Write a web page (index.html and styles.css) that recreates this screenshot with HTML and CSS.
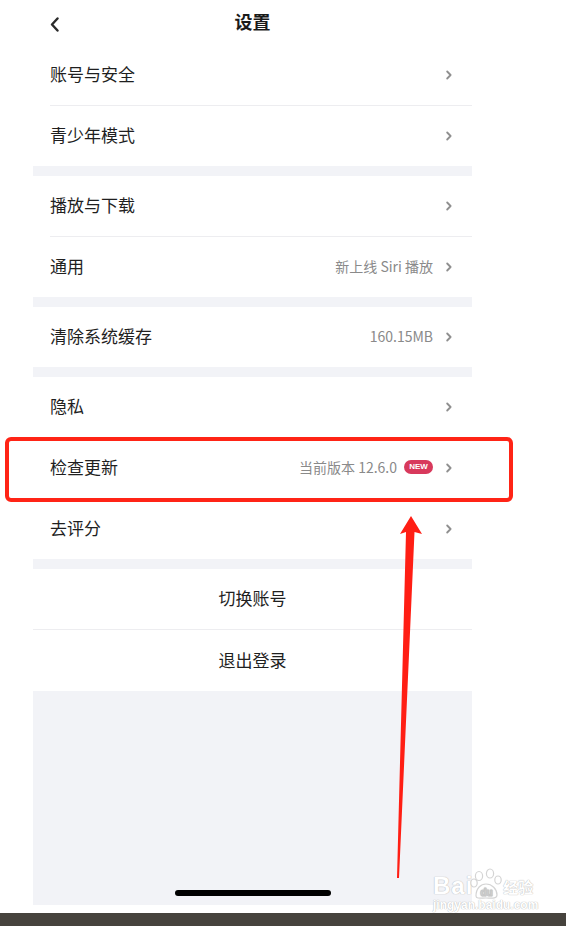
FILE: index.html
```html
<!DOCTYPE html>
<html lang="zh-CN">
<head>
    <meta charset="UTF-8">
    <meta name="viewport" content="width=device-width, initial-scale=1.0">
    <title>设置</title>
    <link rel="stylesheet" href="styles.css">
</head>
<body>
<div class="page">
  <div class="screen">
    <!-- Header -->
    <div class="nav-bar">
      <span class="back-btn">
        <svg width="9" height="15" viewBox="0 0 9 15"><polyline points="7.5,1.5 2,7.5 7.5,13.5" fill="none" stroke="#2b2b2b" stroke-width="2.4" stroke-linecap="round" stroke-linejoin="round"/></svg>
      </span>
      <h1 class="nav-title">设置</h1>
    </div>

    <div class="group">
      <div class="row"><span class="row-label">账号与安全</span><span class="row-right"><svg class="chev" width="6" height="10" viewBox="0 0 6 10"><polyline points="1.2,1.5 4.6,5 1.2,8.5"/></svg></span></div>
      <div class="row"><span class="row-label">青少年模式</span><span class="row-right"><svg class="chev" width="6" height="10" viewBox="0 0 6 10"><polyline points="1.2,1.5 4.6,5 1.2,8.5"/></svg></span></div>
    </div>

    <div class="group">
      <div class="row"><span class="row-label">播放与下载</span><span class="row-right"><svg class="chev" width="6" height="10" viewBox="0 0 6 10"><polyline points="1.2,1.5 4.6,5 1.2,8.5"/></svg></span></div>
      <div class="row"><span class="row-label">通用</span><span class="row-right"><span class="row-value">新上线 Siri 播放</span><svg class="chev" width="6" height="10" viewBox="0 0 6 10"><polyline points="1.2,1.5 4.6,5 1.2,8.5"/></svg></span></div>
    </div>

    <div class="group">
      <div class="row"><span class="row-label">清除系统缓存</span><span class="row-right"><span class="row-value">160.15MB</span><svg class="chev" width="6" height="10" viewBox="0 0 6 10"><polyline points="1.2,1.5 4.6,5 1.2,8.5"/></svg></span></div>
    </div>

    <div class="group">
      <div class="row"><span class="row-label">隐私</span><span class="row-right"><svg class="chev" width="6" height="10" viewBox="0 0 6 10"><polyline points="1.2,1.5 4.6,5 1.2,8.5"/></svg></span></div>
      <div class="row"><span class="row-label">检查更新</span><span class="row-right"><span class="row-value">当前版本 12.6.0</span><span class="badge-new">NEW</span><svg class="chev" width="6" height="10" viewBox="0 0 6 10"><polyline points="1.2,1.5 4.6,5 1.2,8.5"/></svg></span></div>
      <div class="row"><span class="row-label">去评分</span><span class="row-right"><svg class="chev" width="6" height="10" viewBox="0 0 6 10"><polyline points="1.2,1.5 4.6,5 1.2,8.5"/></svg></span></div>
    </div>

    <div class="group">
      <div class="row center">切换账号</div>
      <div class="row center tall">退出登录</div>
    </div>

    <div class="filler">
      <span class="home-indicator"></span>
    </div>
  </div>
  <div class="dock"></div>

  <!-- annotation overlay -->
  <div class="mark-box"></div>
  <svg class="mark-arrow" width="566" height="926" viewBox="0 0 566 926">
    <polygon points="411,516 422,534 414.5,532 399,878 397,878 406,532 400,534" fill="#ff1e14"/>
  </svg>

  <div class="watermark">
    <div class="wm-top">
      <span class="wm-bai">Bai</span>
      <span class="wm-paw">
        <svg width="32" height="32" viewBox="0 0 32 32">
          <g fill="#fff" stroke="#d4d4d4" stroke-width="1.2">
            <ellipse cx="9" cy="8" rx="3.6" ry="4.5"/>
            <ellipse cx="20" cy="5.5" rx="3.6" ry="4.5"/>
            <ellipse cx="28" cy="12" rx="3.2" ry="4"/>
            <ellipse cx="4" cy="15" rx="3.2" ry="4"/>
            <path d="M6 28 C6 20 11 16 16 16 C22 16 27 21 27 27 C27 31 21 30 16 30 C11 30 6 31 6 28 Z"/>
          </g>
          <text x="16.5" y="28" text-anchor="middle" class="wm-du">du</text>
        </svg>
      </span>
      <span class="wm-cn">经验</span>
    </div>
    <div class="wm-url">jingyan.baidu.com</div>
  </div>
</div>
</body>
</html>
```

FILE: styles.css
```css
body {
  margin: 0;
  padding: 0;
  background-color: #fff;
  font-family: "Noto Sans CJK SC", "Noto Sans", sans-serif;
  color: #1f1f1f;
}

.page {
  position: relative;
  width: 566px;
  height: 926px;
  display: flex;
  flex-direction: column;
  overflow: hidden;
}

/* Settings column */
.screen {
  flex: 1;
  width: 439px;
  margin-left: 33px;
  display: flex;
  flex-direction: column;
  background-color: #f2f3f7;
  margin-bottom: 8px;
}

.nav-bar {
  height: 45px;
  display: flex;
  align-items: center;
  justify-content: center;
  position: relative;
  background-color: #fff;
}

.back-btn {
  position: absolute;
  left: 17px;
  top: 17px;
  display: flex;
}

.nav-title {
  margin: 0;
  padding-bottom: 3px;
  font-size: 18px;
  font-weight: bold;
  color: #1a1a1a;
  line-height: 1;
}

.group {
  background-color: #fff;
  margin-bottom: 10px;
}

.row {
  height: 57px;
  padding-bottom: 3px;
  margin-left: 17px;
  padding-right: 20px;
  display: flex;
  align-items: center;
  justify-content: space-between;
  font-size: 17px;
}

.row + .row {
  border-top: 1px solid #ededf0;
}

.row.center {
  margin-left: 0;
  padding-right: 0;
  justify-content: center;
}

.row.tall {
  height: 58px;
}

.row-right {
  display: flex;
  align-items: center;
}

.row-value {
  font-size: 14px;
  color: #8a8a8a;
  margin-right: 13px;
}

.badge-new {
  display: inline-flex;
  align-items: center;
  justify-content: center;
  width: 29px;
  height: 14px;
  border-radius: 7px;
  background-color: #d8395c;
  color: #fff;
  font-family: "Liberation Sans", Arial, sans-serif;
  font-size: 8px;
  font-weight: bold;
  margin-left: -6px;
  margin-right: 13px;
}

.chev {
  display: block;
  margin-top: 2px;
}

.chev polyline {
  fill: none;
  stroke: #8f8f8f;
  stroke-width: 1.8;
  stroke-linecap: round;
  stroke-linejoin: round;
}

.filler {
  flex: 1;
  display: flex;
  align-items: flex-end;
  justify-content: center;
  padding-bottom: 9px;
}

.home-indicator {
  width: 156px;
  height: 6px;
  border-radius: 3px;
  background-color: #000;
}

.dock {
  height: 13px;
  background-color: #46433d;
}

/* Annotation */
.mark-box {
  position: absolute;
  left: 5px;
  top: 437px;
  width: 500px;
  height: 57px;
  border: 4px solid #ff2416;
  border-radius: 6px;
}

.mark-arrow {
  position: absolute;
  left: 0;
  top: 0;
}

/* Watermark */
.watermark {
  position: absolute;
  left: 433px;
  top: 862px;
  width: 102px;
  color: #fff;
  text-shadow: 0 0 1px #bdbdbd, 0 0 1px #bdbdbd;
}

.wm-top {
  display: flex;
  align-items: flex-end;
  height: 36px;
}

.wm-bai {
  font-family: "Liberation Sans", Arial, sans-serif;
  font-size: 24px;
  font-weight: bold;
  line-height: 24px;
  letter-spacing: 1px;
}

.wm-paw {
  display: flex;
  margin-left: -3px;
  margin-bottom: -2px;
}

.wm-du {
  font-family: "Liberation Sans", Arial, sans-serif;
  font-size: 10px;
  font-weight: bold;
  fill: #fff;
  stroke: #c8c8c8;
  stroke-width: 0.6;
}

.wm-cn {
  font-size: 15px;
  font-weight: bold;
  line-height: 18px;
  margin-left: 1px;
  margin-bottom: 2px;
}

.wm-url {
  font-family: "Liberation Sans", Arial, sans-serif;
  font-size: 12px;
  line-height: 14px;
  font-weight: bold;
}
```
